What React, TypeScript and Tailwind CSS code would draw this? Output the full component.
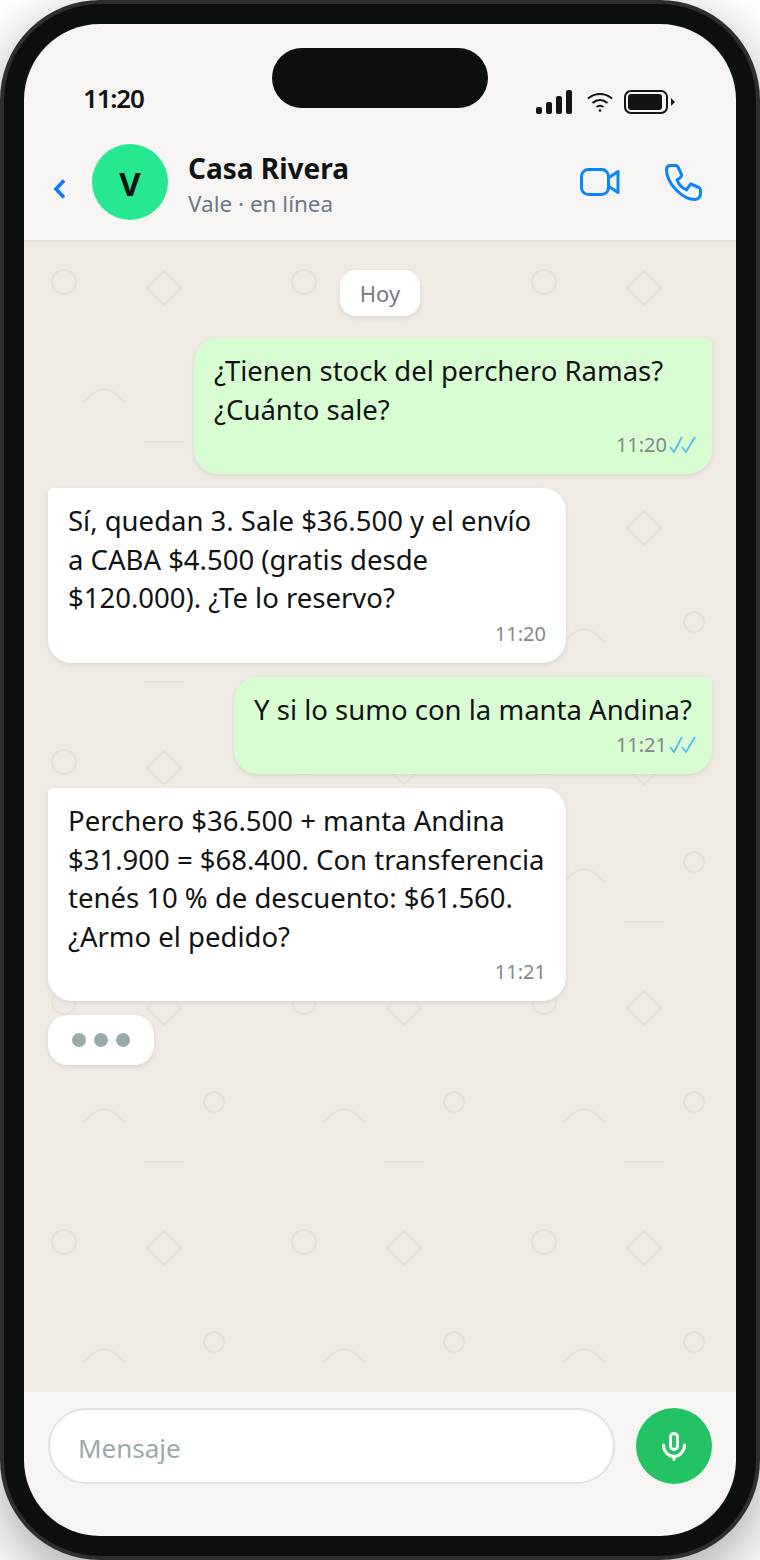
const font = "font-['Noto_Sans',sans-serif]";

function DoubleCheck() {
  return (
    <svg width="28" height="20" viewBox="0 0 28 20" fill="none" stroke="#53bdeb" strokeWidth="1.8" className="shrink-0 ml-px">
      <path d="M2 12l4 5L14 2" />
      <path d="M14 12l4 5L27 2" />
    </svg>
  );
}

function Bubble({ mine, time, children }: { mine?: boolean; time: string; children: React.ReactNode }) {
  return (
    <div
      className={
        mine
          ? "self-end max-w-[78%] bg-[#d9fdd3] rounded-[24px] rounded-tr-[5px] pl-5 pr-5 pt-[14px] pb-[13.7px] shadow-[0_2px_4px_rgba(60,50,30,0.1)]"
          : "self-start max-w-[78%] bg-white rounded-[24px] rounded-tl-[5px] pl-5 pr-5 pt-[14px] pb-[13.7px] shadow-[0_2px_4px_rgba(60,50,30,0.1)]"
      }
    >
      <p className="text-[27.5px] leading-[38.64px] text-[#111413]">{children}</p>
      <div className={mine ? "flex items-center justify-end h-[30px] mt-px -mr-1 text-[20px] text-[#7f8a87]" : "flex items-center justify-end h-[30px] mt-px text-[20px] text-[#7f8a87]"}>
        <span>{time}</span>
        {mine && <DoubleCheck />}
      </div>
    </div>
  );
}

function ChatPattern() {
  return (
    <svg className="absolute inset-0 w-full h-full" aria-hidden="true">
      <defs>
        <pattern id="doodle" width="240" height="240" patternUnits="userSpaceOnUse">
          <g fill="none" stroke="#e6e2da" strokeWidth="2">
            <circle cx="40" cy="40" r="12" />
            <rect x="128" y="34" width="24" height="24" transform="rotate(45 140 46)" />
            <path d="M60 160Q80 135 100 160" />
            <circle cx="190" cy="140" r="10" />
            <path d="M120 200H160" />
          </g>
        </pattern>
      </defs>
      <rect width="100%" height="100%" fill="url(#doodle)" />
    </svg>
  );
}

export default function App() {
  return (
    <div className={`w-[760px] h-[1560px] bg-white overflow-hidden ${font}`}>
      <div className="relative w-full h-full rounded-[100px] border-4 border-[#2c312d] bg-[#0d0f0e] p-5 shadow-[0_20px_60px_rgba(0,0,0,0.35)]">
        <div className="relative flex flex-col h-full rounded-[76px] overflow-hidden bg-[#f6f5f3]">
          <div className="absolute left-[248px] top-6 w-[216px] h-[60px] rounded-[30px] bg-[#0d0f0e]" />

          {/* status bar */}
          <div className="flex items-center justify-between h-[111px] shrink-0 pl-[59px] pr-[60px] pt-[37px]">
            <span className="text-[26px] font-semibold tracking-[-1.2px] text-[#111413]">11:20</span>
            <div className="flex items-center mt-2">
              <svg width="36" height="24" viewBox="0 0 36 24" fill="#111413">
                <rect x="0" y="17" width="6" height="7" rx="2" />
                <rect x="10" y="12" width="6" height="12" rx="2" />
                <rect x="20" y="6" width="6" height="18" rx="2" />
                <rect x="30" y="0" width="6" height="24" rx="2" />
              </svg>
              <svg className="ml-[15px]" width="26" height="20" viewBox="0 0 26 20" fill="none" stroke="#111413" strokeWidth="2">
                <path d="M1 6.500C8 0.500 18 0.500 25 6.500" />
                <path d="M5.500 11C10 7 16 7 20.500 11" />
                <path d="M9.500 15C11.500 13.500 14.500 13.500 16.500 15" />
                <circle cx="13" cy="18.500" r="1.300" fill="#111413" stroke="none" />
              </svg>
              <svg className="ml-[11px]" width="52" height="24" viewBox="0 0 52 24" fill="none">
                <rect x="1" y="1" width="42" height="22" rx="6" stroke="#111413" strokeWidth="2" />
                <rect x="4" y="4" width="34" height="16" rx="3" fill="#111413" />
                <path d="M47 8l4 4-4 4z" fill="#111413" />
              </svg>
            </div>
          </div>

          {/* header */}
          <div className="flex items-center h-[107px] shrink-0 pl-[28px] pr-[34px] pb-[11px] border-b-2 border-[#e4e1da]">
            <svg width="16" height="22" viewBox="0 0 16 22" fill="none" stroke="#0a7cff" strokeWidth="3.6" className="mt-[13px]">
              <path d="M12 2.500L4 11l8 8.500" />
            </svg>
            <div className="ml-6 w-[76px] h-[76px] rounded-full bg-[#25e890] flex items-center justify-center pt-1 text-[33px] font-bold text-[#111413]">
              V
            </div>
            <div className="ml-5 flex-1 pt-[7px]">
              <div className="text-[28px] leading-[36px] font-bold text-[#111413]">Casa Rivera</div>
              <div className="text-[22.5px] leading-[36px] text-[#6f7887]">Vale · en línea</div>
            </div>
            <svg width="40" height="28" viewBox="0 0 40 28" fill="none" stroke="#0a84ff" strokeWidth="3" strokeLinejoin="round">
              <rect x="1.500" y="1.500" width="27" height="25" rx="7" />
              <path d="M29 9.500L38 3.500V24.500L29 18.500" />
            </svg>
            <svg className="ml-11" width="38" height="38" viewBox="0 0 38 38" fill="none" stroke="#0a84ff" strokeWidth="3" strokeLinejoin="round">
              <path d="M2.500 6.500C2.500 3.500 4.500 2.500 6.500 2.500H12C13 2.500 13.500 3 14 4L17.500 11.500C18 12.500 17.500 13.500 16.500 14.500L13 17C14.500 21 18 25 22.500 27L26.500 21L35 24.500C36 25 36.500 26 36.500 27V31C36.500 34 33.500 36.500 31 36.500C19 36.500 2.500 21 2.500 6.500Z" />
            </svg>
          </div>

          {/* messages */}
          <div className="relative flex-1 min-h-0 bg-[#efeae4] overflow-hidden">
            <ChatPattern />
            <div className="relative flex flex-col gap-[14px] px-6 pt-[28px]">
              <div className="self-center mb-2 h-[46px] px-5 flex items-center rounded-2xl bg-white text-[22px] text-[#757b88] shadow-[0_2px_4px_rgba(60,50,30,0.1)]">
                Hoy
              </div>
              <Bubble mine time="11:20">¿Tienen stock del perchero Ramas? ¿Cuánto sale?</Bubble>
              <Bubble time="11:20">Sí, quedan 3. Sale $36.500 y el envío a CABA $4.500 (gratis desde $120.000). ¿Te lo reservo?</Bubble>
              <Bubble mine time="11:21">Y si lo sumo con la manta Andina?</Bubble>
              <Bubble time="11:21">Perchero $36.500 + manta Andina $31.900 = $68.400. Con transferencia tenés 10 % de descuento: $61.560. ¿Armo el pedido?</Bubble>
              <div className="self-start flex items-center gap-2 h-[50px] px-6 rounded-[20px] bg-white shadow-[0_2px_4px_rgba(60,50,30,0.1)]">
                <span className="w-[14px] h-[14px] rounded-full bg-[#98abaa]" />
                <span className="w-[14px] h-[14px] rounded-full bg-[#98abaa]" />
                <span className="w-[14px] h-[14px] rounded-full bg-[#98abaa]" />
              </div>
            </div>
          </div>

          {/* composer */}
          <div className="flex items-start gap-[21px] h-[144px] shrink-0 px-6 pt-4">
            <div className="flex-1 h-[76px] rounded-[38px] border-2 border-[#e3e2dc] bg-white flex items-center px-7 pt-1 text-[26px] text-[#9aabaa]">
              Mensaje
            </div>
            <div className="w-[76px] h-[76px] rounded-full bg-[#23c363] flex items-center justify-center">
              <svg width="26" height="32" viewBox="0 0 26 32" fill="none" stroke="white" strokeWidth="3" strokeLinecap="round">
                <rect x="9.500" y="3.500" width="7" height="16" rx="3.500" />
                <path d="M2.500 15C2.500 22 8 26.500 13 26.500S23.500 22 23.500 15" />
                <path d="M13 26.500V29.500" />
              </svg>
            </div>
          </div>
        </div>
      </div>
    </div>
  );
}
